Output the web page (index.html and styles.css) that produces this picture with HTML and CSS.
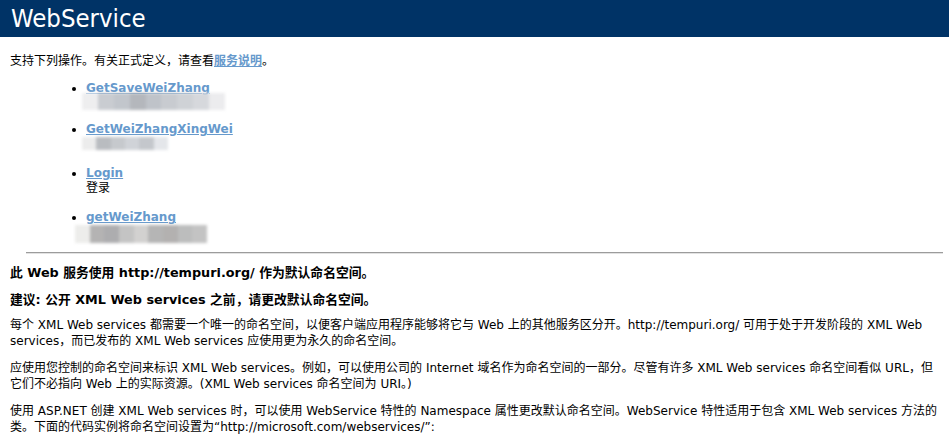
FILE: index.html
```html
<!DOCTYPE html>
<html lang="zh-CN">
<head>
<meta charset="utf-8">
<title>WebService Web 服务</title>
<link rel="stylesheet" href="styles.css">
</head>
<body>
<div class="heading1">WebService</div>
<div class="content">
  <p class="intro">支持下列操作。有关正式定义，请查看<a href="#">服务说明</a>。</p>
  <ul class="ops">
    <li>
      <a href="#">GetSaveWeiZhang</a>
      <div class="desc"><div class="mask m1"><i></i><i></i><i></i><i></i><i></i><i></i><i></i><i></i><i></i></div></div>
    </li>
    <li>
      <a href="#">GetWeiZhangXingWei</a>
      <div class="desc"><div class="mask m2"><i></i><i></i><i></i><i></i><i></i><i></i></div></div>
    </li>
    <li>
      <a href="#">Login</a>
      <div class="desc">登录</div>
    </li>
    <li>
      <a href="#">getWeiZhang</a>
      <div class="desc"><div class="mask m4"><i></i><i></i><i></i><i></i><i></i><i></i><i></i><i></i><i></i></div></div>
    </li>
  </ul>
  <hr class="rule">
  <h3>此 Web 服务使用 http://tempuri.org/ 作为默认命名空间。</h3>
  <h3>建议: 公开 XML Web services 之前，请更改默认命名空间。</h3>
  <p>每个 XML Web services 都需要一个唯一的命名空间，以便客户端应用程序能够将它与 Web 上的其他服务区分开。http://tempuri.org/ 可用于处于开发阶段的 XML Web services，而已发布的 XML Web services 应使用更为永久的命名空间。</p>
  <p>应使用您控制的命名空间来标识 XML Web services。例如，可以使用公司的 Internet 域名作为命名空间的一部分。尽管有许多 XML Web services 命名空间看似 URL，但它们不必指向 Web 上的实际资源。(XML Web services 命名空间为 URI。)</p>
  <p>使用 ASP.NET 创建 XML Web services 时，可以使用 WebService 特性的 Namespace 属性更改默认命名空间。WebService 特性适用于包含 XML Web services 方法的类。下面的代码实例将命名空间设置为“http://microsoft.com/webservices/”:</p>
</div>
</body>
</html>
```

FILE: styles.css
```css
html, body {
  margin: 0;
  padding: 0;
  background: #ffffff;
  color: #000000;
  overflow: hidden;
}

body {
  font-family: "DejaVu Sans", "Noto Sans CJK SC", sans-serif;
  font-size: 12px;
  line-height: 15px;
}

.heading1 {
  height: 37px;
  line-height: 37px;
  background: #003366;
  color: #ffffff;
  font-family: "DejaVu Sans Condensed", "DejaVu Sans", sans-serif;
  font-stretch: condensed;
  font-size: 25.5px;
  padding-left: 11px;
  margin: 0;
}

.content {
  padding: 0 6px 0 10px;
}

a {
  color: #6699cc;
  font-weight: bold;
  text-decoration: underline;
}

p {
  margin: 0 0 12px 0;
  line-height: 15.5px;
}

.intro {
  margin: 17px 0 0 0;
  line-height: 15px;
}

.ops {
  margin: 12px 0 0 0;
  padding: 0 0 0 76px;
  list-style: disc;
}

.ops li {
  margin: 0 0 14px 0;
  line-height: 15px;
}

.ops li:last-child {
  margin-bottom: 0;
}

.desc {
  height: 15px;
}

.mask {
  display: flex;
  filter: blur(1.6px);
}

.mask i {
  flex: 1 1 0;
  display: block;
}

.m1 {
  width: 143px;
  height: 17px;
  margin: -3px 0 0 -4px;
}
.m1 i:nth-child(1) { background: #eeeeef; }
.m1 i:nth-child(2) { background: #c9ccd1; }
.m1 i:nth-child(3) { background: #c2c6cc; }
.m1 i:nth-child(4) { background: #b4b7bc; }
.m1 i:nth-child(5) { background: #bfc3c9; }
.m1 i:nth-child(6) { background: #c8cbd0; }
.m1 i:nth-child(7) { background: #cfd2d6; }
.m1 i:nth-child(8) { background: #d6d8dc; }
.m1 i:nth-child(9) { background: #ececee; }

.m2 {
  width: 86px;
  height: 13px;
  margin: 0 0 0 -4px;
}
.m2 i:nth-child(1) { background: #ececec; }
.m2 i:nth-child(2) { background: #b9bcc0; }
.m2 i:nth-child(3) { background: #c6c9cd; }
.m2 i:nth-child(4) { background: #d0d3d8; }
.m2 i:nth-child(5) { background: #c4c7cc; }
.m2 i:nth-child(6) { background: #e4e6ea; }

.m4 {
  width: 132px;
  height: 18px;
  margin: 0 0 0 -11px;
}
.m4 i:nth-child(1) { background: #ededeb; }
.m4 i:nth-child(2) { background: #b4b3b3; }
.m4 i:nth-child(3) { background: #adadaf; }
.m4 i:nth-child(4) { background: #c4c4c4; }
.m4 i:nth-child(5) { background: #d2d1d0; }
.m4 i:nth-child(6) { background: #b5b5b5; }
.m4 i:nth-child(7) { background: #b3b1b0; }
.m4 i:nth-child(8) { background: #bcbdbd; }
.m4 i:nth-child(9) { background: #c3c3c3; }

.rule {
  margin: 12px 0 0 16px;
  height: 0;
  border: 0;
  border-top: 1px solid #9c9c9c;
  border-bottom: 1px solid #e2e2e2;
}

h3 {
  font-size: 12.8px;
  font-weight: bold;
  line-height: 17px;
  margin: 10px 0 10px 0;
}
```
